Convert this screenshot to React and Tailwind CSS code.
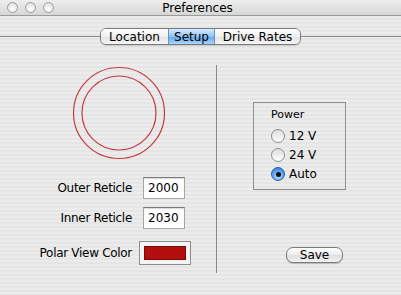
import React, { useState } from "react";

const Field = ({ value }) => (
  <div className="w-[42px] h-[22px] bg-white border border-[#a5a5a5] border-t-[#7c7c7c] shadow-[inset_0_1px_1px_rgba(0,0,0,0.15)] flex items-center pl-[4px] text-[12px] text-black">
    {value}
  </div>
);

const Radio = ({ checked, label }) => (
  <div className="flex items-center gap-[4px] h-[19px]">
    {checked ? (
      <div className="w-[14px] h-[14px] rounded-full border border-[#2d5aa5] bg-[radial-gradient(circle_at_50%_70%,#bfe3ff_0%,#5fa6f0_50%,#2f6fc8_100%)] flex items-center justify-center">
        <div className="w-[5px] h-[5px] rounded-full bg-[#111]" />
      </div>
    ) : (
      <div className="w-[14px] h-[14px] rounded-full border border-[#8e8e8e] bg-[linear-gradient(180deg,#dcdcdc,#ffffff)]" />
    )}
    <span className="text-[12px] text-black">{label}</span>
  </div>
);

export default function App() {
  const [power, setPower] = useState("Auto");

  return (
    <div className="w-[401px] h-[295px] overflow-hidden font-['DejaVu_Sans',sans-serif] text-black bg-[repeating-linear-gradient(180deg,#ececec_0px,#ececec_2px,#e5e5e5_2px,#e5e5e5_4px)]">
      {/* title bar */}
      <div className="h-[16px] flex items-center border-b border-[#9a9a9a] bg-[linear-gradient(180deg,#eeeeee,#d6d6d6)]">
        <div className="flex gap-[7px] ml-[7px]">
          {[0, 1, 2].map((i) => (
            <div
              key={i}
              className="w-[11px] h-[11px] rounded-full border border-[#9c9c9c] bg-[radial-gradient(circle_at_50%_70%,#ffffff,#d8d8d8)]"
            />
          ))}
        </div>
        <div className="flex-1 text-center text-[12px] pr-[60px] leading-none">Preferences</div>
      </div>

      {/* tabs */}
      <div className="mt-[12px] h-[17px] flex items-center">
        <div className="flex-1 h-px bg-[#8c8c8c]" />
        <div className="flex h-[17px] rounded-[6px] border border-[#7a7a7a] overflow-hidden text-[12px] shadow-[0_1px_1px_rgba(0,0,0,0.15)]">
          <div className="w-[67px] flex items-center justify-center bg-[linear-gradient(180deg,#ffffff,#efefef_50%,#e2e2e2_51%,#f5f5f5)]">
            Location
          </div>
          <div className="w-[47px] flex items-center justify-center border-x border-[#6f8fbf] bg-[linear-gradient(180deg,#d4ebff,#8fc3f5_50%,#63a5ec_51%,#a8d6ff)]">
            Setup
          </div>
          <div className="w-[85px] flex items-center justify-center bg-[linear-gradient(180deg,#ffffff,#efefef_50%,#e2e2e2_51%,#f5f5f5)]">
            Drive Rates
          </div>
        </div>
        <div className="flex-1 h-px bg-[#8c8c8c]" />
      </div>

      {/* content */}
      <div className="flex mt-[20px]">
        <div className="w-[216px] flex flex-col">
          <svg width="94" height="94" viewBox="0 0 94 94" className="ml-[72px] mt-[1px]">
            <circle cx="47" cy="47" r="45.5" fill="none" stroke="#c43a44" strokeWidth="1.2" />
            <circle cx="47" cy="47" r="37" fill="none" stroke="#c43a44" strokeWidth="1.2" />
          </svg>

          <div className="mt-[17px] grid grid-cols-[132px_auto] gap-x-[11px] items-center">
            <span className="text-right text-[12px] tracking-[-0.3px]">Outer Reticle</span>
            <Field value="2000" />
          </div>
          <div className="mt-[8px] grid grid-cols-[132px_auto] gap-x-[11px] items-center">
            <span className="text-right text-[12px] tracking-[-0.3px]">Inner Reticle</span>
            <Field value="2030" />
          </div>
          <div className="mt-[12px] grid grid-cols-[132px_auto] gap-x-[7px] items-center">
            <span className="text-right text-[12px] tracking-[-0.3px]">Polar View Color</span>
            <div className="w-[52px] h-[24px] border border-[#8c8c8c] bg-[#f4f4f4] flex items-center justify-center">
              <div className="w-[42px] h-[14px] bg-[#b40f0f] border border-[#7a0a0a]" />
            </div>
          </div>
        </div>

        <div className="w-px h-[208px] bg-[#8a8a8a]" />

        <div className="flex-1 flex flex-col">
          <div className="ml-[36px] mt-[37px] w-[93px] h-[88px] border border-[#8e8e8e] pl-[17px] pt-[4px]">
            <div className="text-[11px] mb-[3px]">Power</div>
            <div className="flex flex-col">
              {["12 V", "24 V", "Auto"].map((v) => (
                <div key={v} onClick={() => setPower(v)} className="cursor-pointer">
                  <Radio checked={power === v} label={v} />
                </div>
              ))}
            </div>
          </div>
          <button className="ml-[69px] mt-[57px] w-[57px] h-[16px] rounded-[7px] border border-[#7a7a7a] text-[12px] leading-none bg-[linear-gradient(180deg,#ffffff,#ececec_50%,#dedede_51%,#f3f3f3)] shadow-[0_1px_1px_rgba(0,0,0,0.2)]">
            Save
          </button>
        </div>
      </div>
    </div>
  );
}
